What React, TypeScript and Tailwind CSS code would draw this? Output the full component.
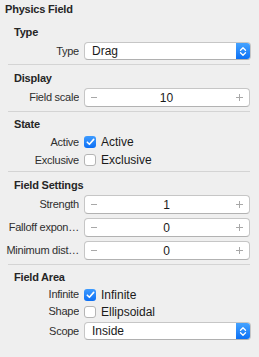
import React from "react";

const Chevrons = () => (
  <svg width="8" height="11" viewBox="0 0 8 11" fill="none">
    <path d="M1.5 4.2 L4 1.7 L6.5 4.2" stroke="white" strokeWidth="1.3" strokeLinecap="round" strokeLinejoin="round" />
    <path d="M1.5 6.8 L4 9.3 L6.5 6.8" stroke="white" strokeWidth="1.3" strokeLinecap="round" strokeLinejoin="round" />
  </svg>
);

const Label = ({ children }: { children: React.ReactNode }) => (
  <div className="w-[79px] shrink-0 text-right text-[11px] tracking-[-0.25px] text-[#2e2e2e] whitespace-nowrap overflow-hidden">
    {children}
  </div>
);

const Popup = ({ label, value, className = "" }: { label: string; value: string; className?: string }) => (
  <div className={`flex items-center h-[18px] ${className}`}>
    <Label>{label}</Label>
    <div className="ml-[5px] w-[167px] h-[18px] flex rounded-[4px] bg-white border border-[#c6c6c6] border-b-[#b0b0b0] overflow-hidden">
      <div className="flex-1 flex items-center pl-[7px] text-[12px] text-[#1a1a1a] leading-none">{value}</div>
      <div className="w-[14px] h-full flex items-center justify-center bg-gradient-to-b from-[#45a3ff] to-[#0a70f5]">
        <Chevrons />
      </div>
    </div>
  </div>
);

const Stepper = ({ label, value, className = "" }: { label: string; value: string; className?: string }) => (
  <div className={`flex items-center h-[19px] ${className}`}>
    <Label>{label}</Label>
    <div className="ml-[5px] w-[166px] h-[19px] flex items-center rounded-[4px] bg-white border border-[#c6c6c6] border-b-[#b2b2b2] px-[6px]">
      <div className="w-[6px] h-px bg-[#a8a8a8]" />
      <div className="flex-1 text-center text-[12px] text-[#1a1a1a] leading-none">{value}</div>
      <div className="relative w-[7px] h-[7px]">
        <div className="absolute left-0 top-[3px] w-[7px] h-px bg-[#a8a8a8]" />
        <div className="absolute left-[3px] top-0 w-px h-[7px] bg-[#a8a8a8]" />
      </div>
    </div>
  </div>
);

const Check = ({ label, text, checked, className = "" }: { label: string; text: string; checked: boolean; className?: string }) => (
  <div className={`flex items-center ${className}`}>
    <Label>{label}</Label>
    <div
      className={`ml-[5px] w-[12px] h-[12px] rounded-[3px] flex items-center justify-center ${
        checked ? "bg-gradient-to-b from-[#3d9bff] to-[#0b6ff4]" : "bg-white border border-[#b5b5b5]"
      }`}
    >
      {checked && (
        <svg width="9" height="8" viewBox="0 0 9 8" fill="none">
          <path d="M1.3 4.2 L3.4 6.3 L7.7 1.4" stroke="white" strokeWidth="1.6" strokeLinecap="round" strokeLinejoin="round" />
        </svg>
      )}
    </div>
    <div className="ml-[5px] text-[12px] text-[#1a1a1a] leading-none">{text}</div>
  </div>
);

const Header = ({ children, className = "" }: { children: React.ReactNode; className?: string }) => (
  <div className={`pl-[14px] h-[14px] leading-[14px] text-[11px] tracking-[-0.2px] font-bold text-[#262626] ${className}`}>{children}</div>
);

const Sep = ({ className = "" }: { className?: string }) => (
  <div className={`ml-[8px] w-[242px] h-px bg-[#d4d4d4] ${className}`} />
);

export default function App() {
  return (
    <div
      className="w-[259px] h-[357px] bg-[#efefef] flex flex-col overflow-hidden"
      style={{ fontFamily: '"Liberation Sans", Arial, sans-serif' }}
    >
      <div className="mt-[2px] pl-[5px] h-[14px] leading-[14px] text-[11px] tracking-[-0.2px] font-bold text-[#262626]">Physics Field</div>

      <Header className="mt-[9px]">Type</Header>
      <Popup label="Type" value="Drag" className="mt-[3px]" />
      <Sep className="mt-[4px]" />

      <Header className="mt-[6px]">Display</Header>
      <Stepper label="Field scale" value="10" className="mt-[3px]" />
      <Sep className="mt-[4px]" />

      <Header className="mt-[5px]">State</Header>
      <Check label="Active" text="Active" checked className="mt-[2px] h-[18px]" />
      <Check label="Exclusive" text="Exclusive" checked={false} className="h-[18px]" />
      <Sep className="mt-[2px]" />

      <Header className="mt-[6px]">Field Settings</Header>
      <Stepper label="Strength" value="1" className="mt-[3px]" />
      <Stepper label="Falloff expon…" value="0" className="mt-[4px]" />
      <Stepper label="Minimum dist…" value="0" className="mt-[4px]" />
      <Sep className="mt-[4px]" />

      <Header className="mt-[5px]">Field Area</Header>
      <Check label="Infinite" text="Infinite" checked className="mt-[2px] h-[17px]" />
      <Check label="Shape" text="Ellipsoidal" checked={false} className="h-[17px]" />
      <Popup label="Scope" value="Inside" className="mt-[2px]" />
    </div>
  );
}
